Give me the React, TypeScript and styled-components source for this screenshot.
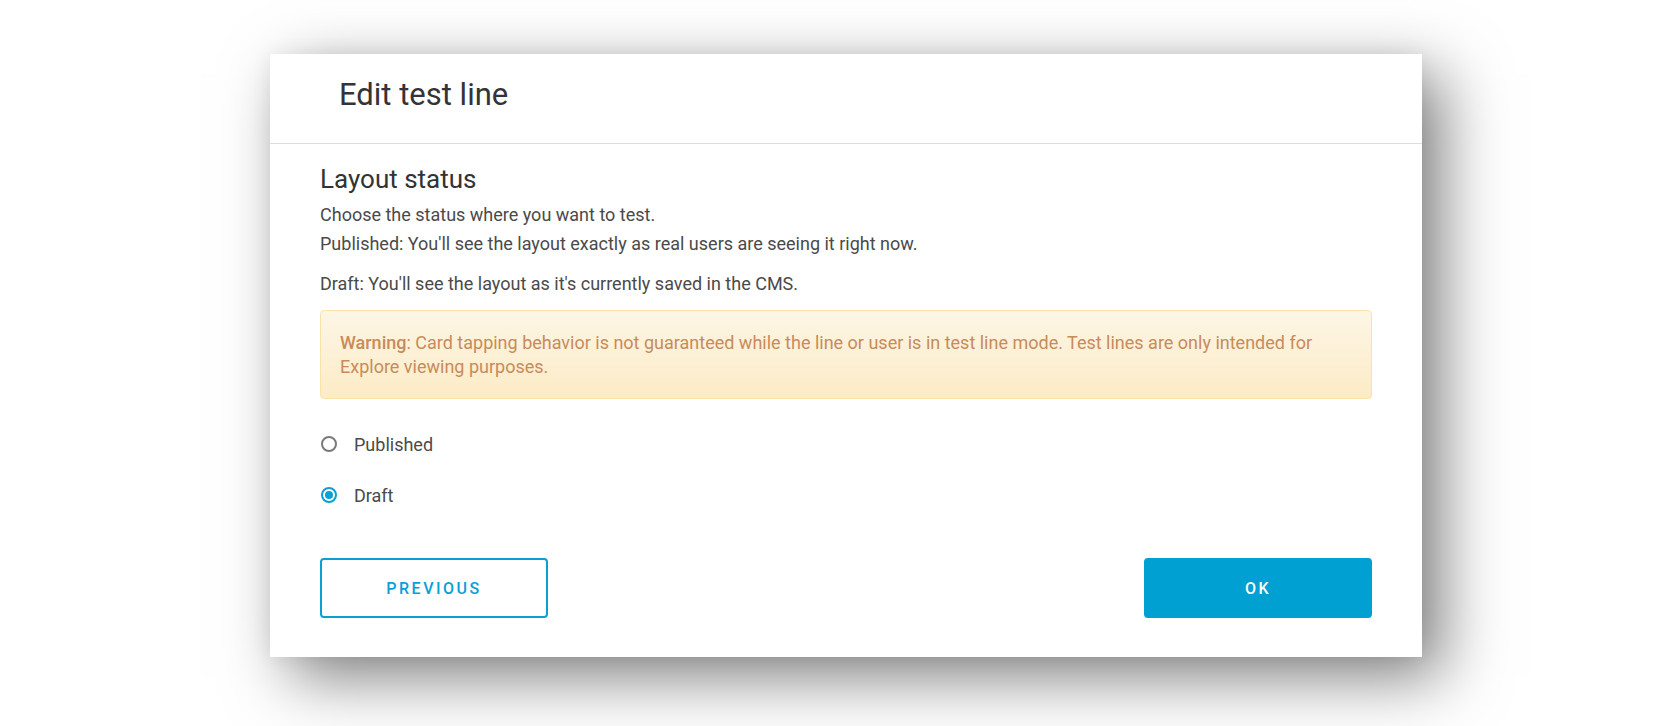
import React, { useState } from "react";
import styled, { createGlobalStyle, css } from "styled-components";

const GlobalStyle = createGlobalStyle`
  html, body {
    margin: 0;
    padding: 0;
    background: #ffffff;
  }
  body {
    font-family: Roboto, "Liberation Sans", Arial, sans-serif;
    -webkit-font-smoothing: antialiased;
  }
  * { box-sizing: border-box; }
`;

const Page = styled.div`
  width: 1674px;
  height: 726px;
  padding: 54px 0 0 270px;
  overflow: hidden;
`;

const Dialog = styled.section`
  width: 1152px;
  height: 603px;
  background: #ffffff;
  display: flex;
  flex-direction: column;
  box-shadow: 20px 20px 60px rgba(0, 0, 0, 0.5), 0 0 20px rgba(0, 0, 0, 0.06);
`;

const Header = styled.header`
  height: 90px;
  border-bottom: 1px solid #dddddd;
  padding: 25px 0 0 69px;
`;

const Title = styled.h1`
  margin: 0;
  font-size: 31px;
  line-height: 31px;
  font-weight: 400;
  color: #333338;
`;

const Body = styled.div`
  flex: 1;
  display: flex;
  flex-direction: column;
  padding: 20px 50px 39px 50px;
`;

const SectionTitle = styled.h2`
  margin: 0;
  font-size: 26px;
  line-height: 30px;
  font-weight: 400;
  color: #333333;
`;

const Paragraph = styled.p<{ $gap?: number }>`
  margin: ${(p) => p.$gap ?? 0}px 0 0 0;
  font-size: 18px;
  line-height: 29px;
  color: #4a4a4a;
`;

const Alert = styled.div`
  margin-top: 12px;
  border: 1px solid #fbe2a9;
  border-radius: 4px;
  background: linear-gradient(180deg, #fdf6e6 0%, #fcebc6 100%);
  padding: 20px 19px 19px 19px;
  font-size: 18px;
  line-height: 24px;
  color: #c88b5a;
`;

const Strong = styled.strong`
  font-weight: 500;
`;

const RadioGroup = styled.div`
  margin-top: 30px;
  display: flex;
  flex-direction: column;
  gap: 21px;
`;

const RadioRow = styled.label`
  display: flex;
  align-items: center;
  height: 30px;
  gap: 17px;
  cursor: pointer;
  font-size: 18px;
  color: #4a4a4a;
  padding-left: 1px;
`;

const RadioCircle = styled.span<{ $checked: boolean }>`
  width: 16px;
  height: 16px;
  border-radius: 50%;
  border: 2px solid ${(p) => (p.$checked ? "#0aa0d6" : "#7a7a7a")};
  display: flex;
  align-items: center;
  justify-content: center;
  &::after {
    content: "";
    width: 8px;
    height: 8px;
    border-radius: 50%;
    background: ${(p) => (p.$checked ? "#0aa0d6" : "transparent")};
  }
`;

const Actions = styled.div`
  margin-top: auto;
  display: flex;
  justify-content: space-between;
`;

const Button = styled.button<{ $primary?: boolean }>`
  width: 228px;
  height: 60px;
  border-radius: 4px;
  font-family: Roboto, "Liberation Sans", Arial, sans-serif;
  font-size: 16px;
  font-weight: 500;
  letter-spacing: 2.5px;
  cursor: pointer;
  ${(p) =>
    p.$primary
      ? css`
          background: #00a0d2;
          border: 2px solid #00a0d2;
          color: #ffffff;
        `
      : css`
          background: #ffffff;
          border: 2px solid #0aa0d6;
          color: #0aa0d6;
        `}
`;

export default function App() {
  const [status, setStatus] = useState<"published" | "draft">("draft");
  return (
    <>
      <GlobalStyle />
      <Page>
        <Dialog>
          <Header>
            <Title>Edit test line</Title>
          </Header>
          <Body>
            <SectionTitle>Layout status</SectionTitle>
            <Paragraph $gap={6}>
              Choose the status where you want to test.
              <br />
              Published: You'll see the layout exactly as real users are seeing it right now.
            </Paragraph>
            <Paragraph $gap={11}>Draft: You'll see the layout as it's currently saved in the CMS.</Paragraph>
            <Alert>
              <Strong>Warning</Strong>: Card tapping behavior is not guaranteed while the line or user is in test
              line mode. Test lines are only intended for Explore viewing purposes.
            </Alert>
            <RadioGroup>
              <RadioRow onClick={() => setStatus("published")}>
                <RadioCircle $checked={status === "published"} />
                Published
              </RadioRow>
              <RadioRow onClick={() => setStatus("draft")}>
                <RadioCircle $checked={status === "draft"} />
                Draft
              </RadioRow>
            </RadioGroup>
            <Actions>
              <Button>PREVIOUS</Button>
              <Button $primary>OK</Button>
            </Actions>
          </Body>
        </Dialog>
      </Page>
    </>
  );
}
